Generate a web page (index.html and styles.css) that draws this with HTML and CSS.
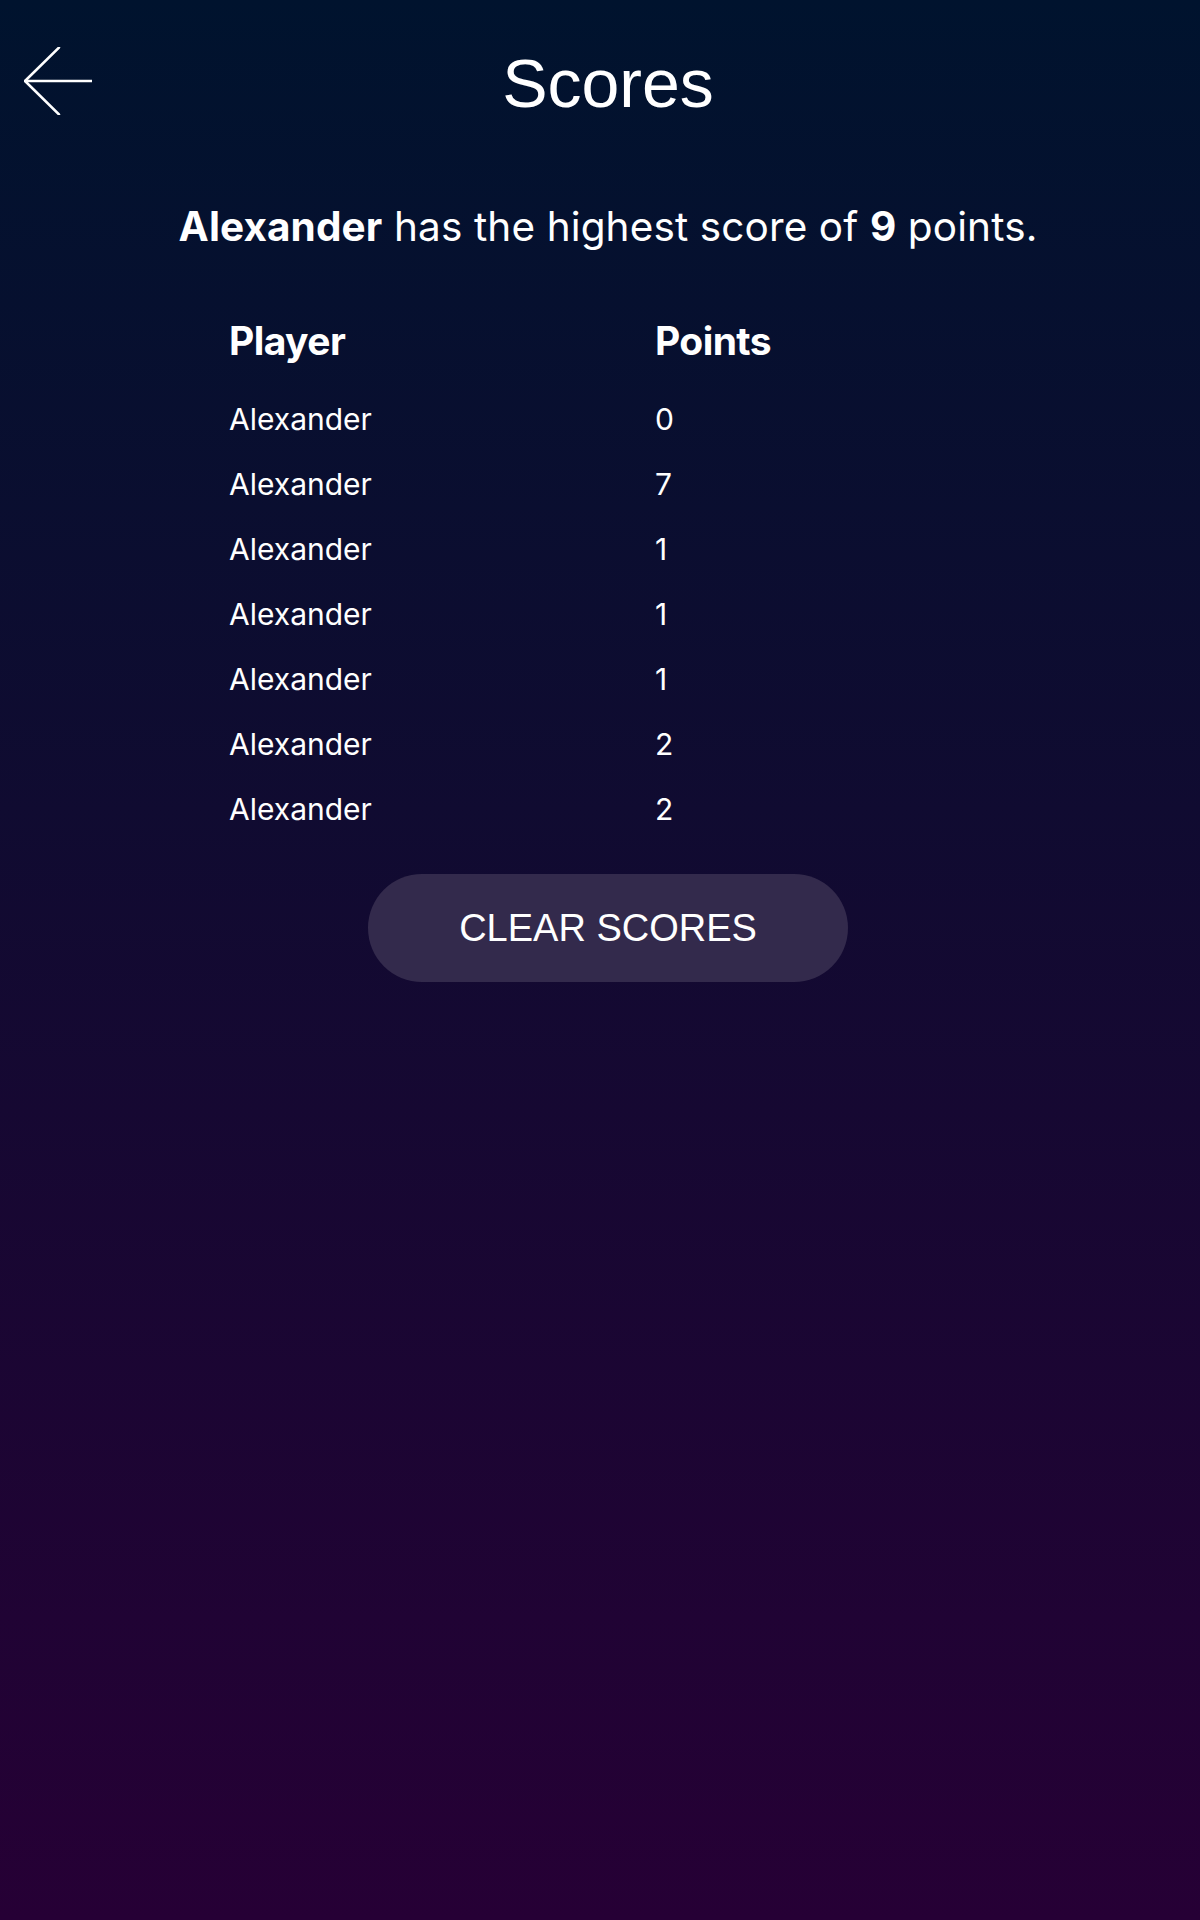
FILE: index.html
```html
<!DOCTYPE html>
<html lang="en">
<head>
<meta charset="utf-8">
<title>Scores</title>
<link rel="stylesheet" href="styles.css">
</head>
<body>
<div class="page">
  <header class="header">
    <button class="back" aria-label="Back">
      <svg width="68" height="68" viewBox="0 0 68 68" fill="none" stroke="#ffffff" stroke-width="2.5" stroke-linecap="round" stroke-linejoin="round">
        <path d="M35 0.5 L1 34 L35 67.5"/>
        <path d="M1 34 H68"/>
      </svg>
    </button>
    <h1 class="title">Scores</h1>
    <div class="spacer"></div>
  </header>

  <p class="summary"><strong>Alexander</strong> has the highest score of <strong>9</strong> points.</p>

  <div class="table">
    <div class="th">Player</div>
    <div class="th">Points</div>
    <div class="td">Alexander</div><div class="td">0</div>
    <div class="td">Alexander</div><div class="td">7</div>
    <div class="td">Alexander</div><div class="td">1</div>
    <div class="td">Alexander</div><div class="td">1</div>
    <div class="td">Alexander</div><div class="td">1</div>
    <div class="td">Alexander</div><div class="td">2</div>
    <div class="td">Alexander</div><div class="td">2</div>
  </div>

  <div class="actions">
    <button class="clear">CLEAR SCORES</button>
  </div>
</div>
</body>
</html>
```

FILE: styles.css
```css
html, body {
  margin: 0;
  padding: 0;
}

body {
  min-height: 1920px;
  background: linear-gradient(180deg, #00132e 0%, #260035 100%);
  color: #ffffff;
  font-family: "Inter", "Liberation Sans", sans-serif;
}

.page {
  padding-left: 16px;
  box-sizing: border-box;
}

.header {
  display: grid;
  grid-template-columns: 1fr auto 1fr;
  align-items: start;
  padding-top: 47px;
  height: 72px;
}

.back {
  justify-self: start;
  margin-left: 8px;
  padding: 0;
  border: 0;
  background: none;
  width: 68px;
  height: 68px;
  display: block;
  cursor: pointer;
}

.back svg {
  display: block;
}

.title {
  margin: 0;
  font-family: "Liberation Sans", Arial, sans-serif;
  font-weight: 400;
  font-size: 68px;
  line-height: 72px;
  color: #ffffff;
}

.summary {
  margin: 84px 0 0;
  text-align: center;
  font-size: 40.5px;
  line-height: 48px;
  font-weight: 400;
  letter-spacing: 0.003em;
}

.summary strong {
  font-weight: 700;
}

.table {
  width: 758px;
  margin: 66px auto 0;
  display: grid;
  grid-template-columns: 426px 1fr;
}

.th {
  font-weight: 700;
  font-size: 39px;
  line-height: 48px;
  letter-spacing: -0.015em;
  margin-bottom: 22px;
}

.td {
  font-size: 30px;
  line-height: 65px;
  height: 65px;
}

.actions {
  display: flex;
  justify-content: center;
  margin-top: 32px;
}

.clear {
  width: 480px;
  height: 108px;
  border: 0;
  border-radius: 54px;
  background: #332a4c;
  color: #ffffff;
  font-family: "Liberation Sans", Arial, sans-serif;
  font-size: 38px;
  cursor: pointer;
}
```
